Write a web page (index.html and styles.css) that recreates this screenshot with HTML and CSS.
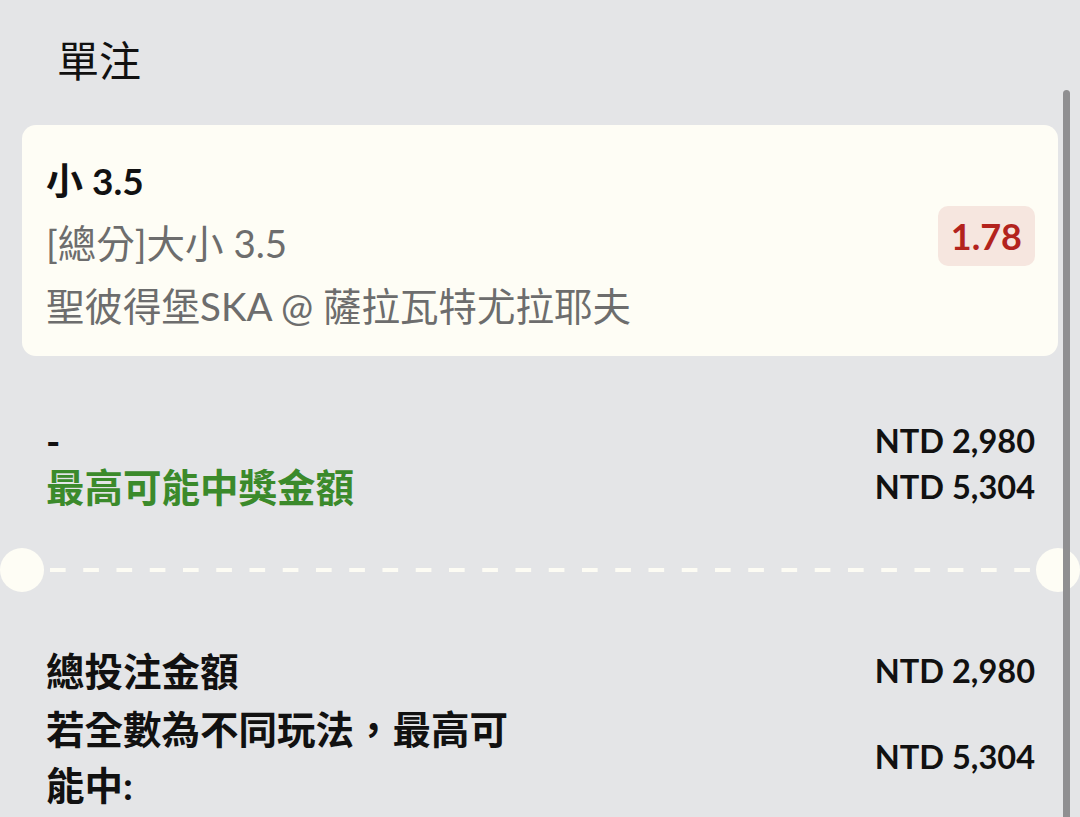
FILE: index.html
```html
<!DOCTYPE html>
<html lang="zh-Hant">
<head>
    <meta charset="UTF-8">
    <meta name="viewport" content="width=device-width, initial-scale=1.0">
    <title>單注</title>
    <link rel="stylesheet" href="styles.css">
</head>
<body>
    <h1 class="title">單注</h1>

    <div class="slip">
        <!-- 投注項目 -->
        <div class="bet-card">
            <div class="bet-info">
                <div class="bet-pick">小 3.5</div>
                <div class="bet-market">[總分]大小 3.5</div>
                <div class="bet-match">聖彼得堡SKA @ 薩拉瓦特尤拉耶夫</div>
            </div>
            <div class="odds">1.78</div>
        </div>

        <div class="summary">
            <div class="row">
                <span class="label">-</span>
                <span class="amount">NTD 2,980</span>
            </div>
            <div class="row">
                <span class="label win">最高可能中獎金額</span>
                <span class="amount">NTD 5,304</span>
            </div>
        </div>
    </div>

    <!-- 票根虛線 -->
    <div class="divider">
        <span class="notch"></span>
        <span class="dashes"></span>
        <span class="notch"></span>
    </div>

    <div class="slip">
        <div class="totals">
            <div class="row">
                <span class="label">總投注金額</span>
                <span class="amount">NTD 2,980</span>
            </div>
            <div class="row">
                <span class="label">若全數為不同玩法，最高可能中:</span>
                <span class="amount">NTD 5,304</span>
            </div>
        </div>
    </div>

    <div class="scrollbar"></div>
</body>
</html>
```

FILE: styles.css
```css
body {
    margin: 0;
    background-color: #e4e5e7;
    font-family: Lato, "Noto Sans CJK TC", sans-serif;
    color: #111;
    overflow: hidden;
}
.title {
    margin: 0;
    padding: 31px 0 0 57px;
    font-size: 42px;
    font-weight: 400;
    line-height: 60px;
}
.slip {
    margin: 0 22px;
}
.bet-card {
    margin-top: 34px;
    display: flex;
    align-items: center;
    justify-content: space-between;
    padding: 24px 23px 18px 24px;
    background-color: #fefdf5;
    border-radius: 14px;
}
.bet-info {
    font-size: 38.5px;
    line-height: 63px;
}
.bet-pick {
    font-size: 37px;
    font-weight: 700;
    color: #111;
}
.bet-market,
.bet-match {
    color: #6d6d6d;
}
.odds {
    margin-bottom: 16px;
    padding: 0 13px;
    line-height: 60px;
    font-size: 36px;
    font-weight: 700;
    color: #b3231d;
    background-color: #f6e6df;
    border-radius: 10px;
}
.summary {
    margin-top: 62px;
    padding: 0 23px 0 24px;
}
.row {
    display: flex;
    align-items: center;
    justify-content: space-between;
}
.summary .row {
    line-height: 46px;
}
.label {
    font-size: 38.5px;
    font-weight: 700;
}
.label.win {
    color: #3b8a2b;
}
.amount {
    font-size: 32.5px;
    font-weight: 700;
}
.divider {
    margin-top: 38px;
    display: flex;
    align-items: center;
    height: 44px;
}
.notch {
    flex: none;
    width: 44px;
    height: 44px;
    border-radius: 50%;
    background-color: #fefdf5;
}
.dashes {
    flex: 1;
    height: 4px;
    margin: 0 5px 0 6px;
    background-image: linear-gradient(to right, #fdfcf4 16px, transparent 16px);
    background-size: 33.25px 4px;
}
.totals {
    margin-top: 51px;
    padding: 0 23px 0 24px;
}
.totals .row {
    line-height: 56px;
    margin-bottom: 2px;
}
.totals .label {
    width: 480px;
}
.scrollbar {
    position: fixed;
    top: 90px;
    right: 10px;
    bottom: 0;
    width: 7px;
    background-color: #8f8f91;
    border-radius: 4px 4px 0 0;
}
```
